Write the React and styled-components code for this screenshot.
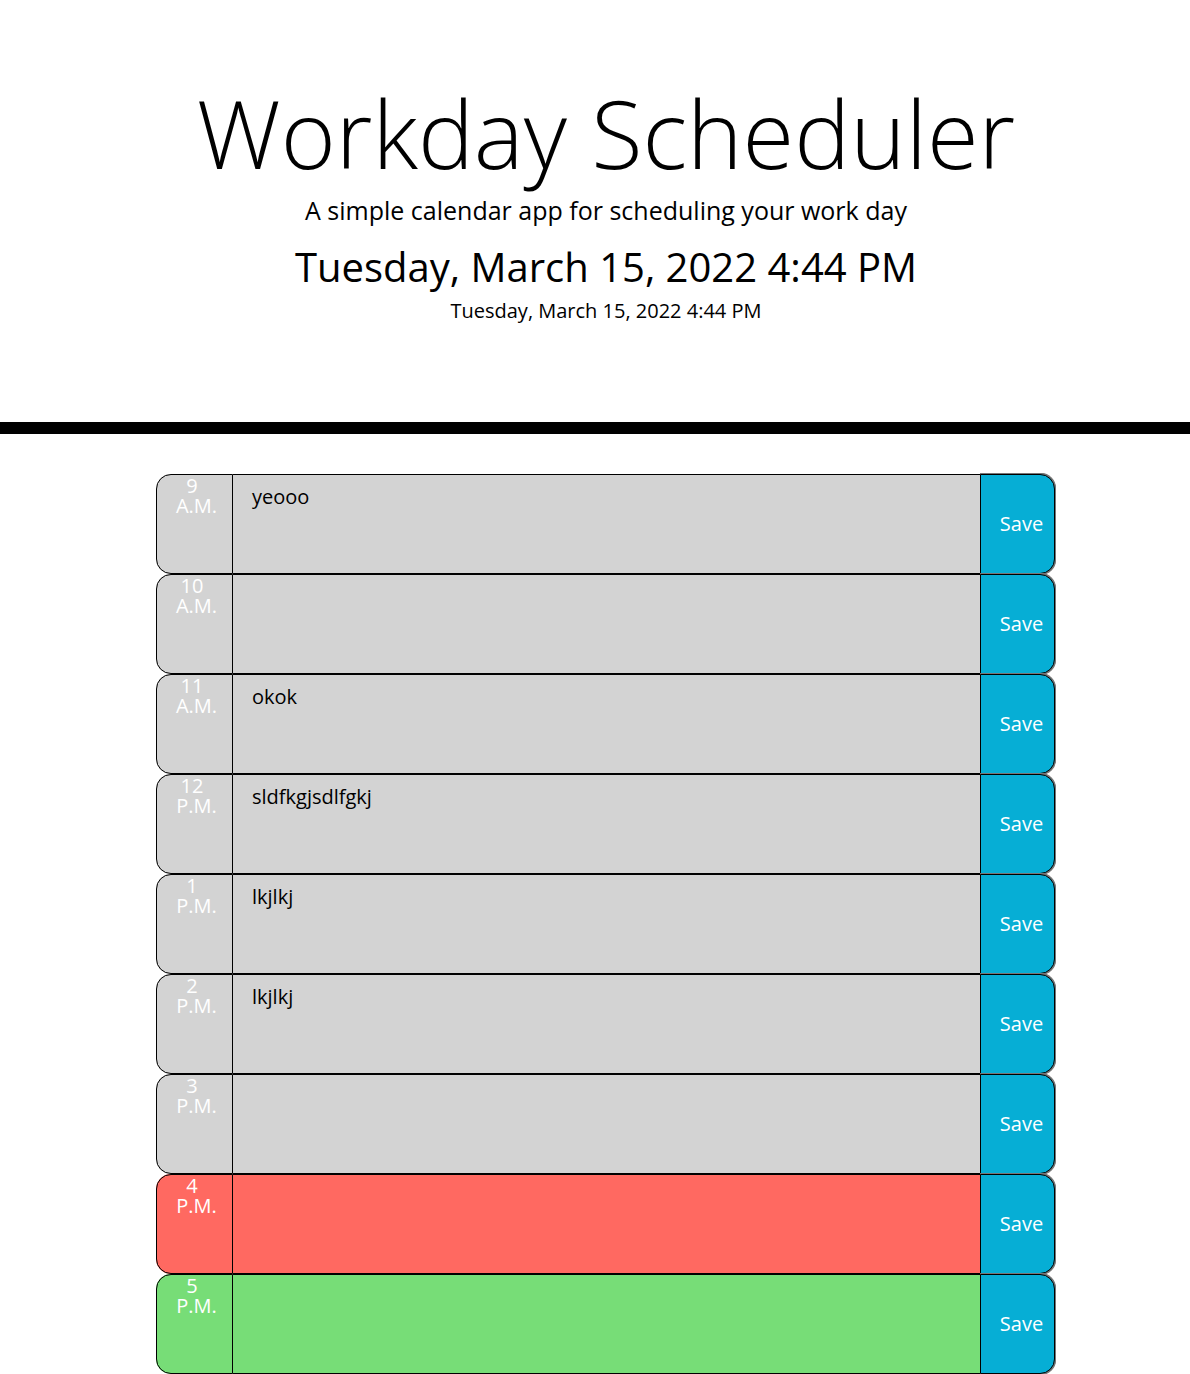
import React, { useState } from "react";
import styled, { createGlobalStyle } from "styled-components";

const Global = createGlobalStyle`
  html, body { margin: 0; padding: 0; background: #ffffff; }
  body { font-family: "Open Sans", "Liberation Sans", sans-serif; color: #000; }
  * { box-sizing: border-box; }
`;

const Header = styled.header`
  text-align: center;
  padding: 77px 0 96px 22px;
  border-bottom: 12px solid #000;
`;

const Title = styled.h1`
  margin: 0;
  font-size: 94px;
  font-weight: 300;
  line-height: 113px;
`;

const Lead = styled.p`
  margin: 2px 0 0;
  font-size: 25px;
  font-weight: 400;
  line-height: 36px;
`;

const BigDate = styled.p`
  margin: 15px 0 0;
  font-size: 40px;
  line-height: 48px;
`;

const SmallDate = styled.p`
  margin: 5px 0 0;
  font-size: 20px;
  line-height: 30px;
`;

const Schedule = styled.main`
  width: 899px;
  margin: 40px 0 0 156px;
`;

const colors = { past: "#d3d3d3", present: "#ff6961", future: "#77dd77" };

const Row = styled.section`
  display: grid;
  grid-template-columns: 77px 1fr 75px;
  height: 100px;
  background: ${(p) => colors[p.$state]};
  border-radius: 15px;
`;

const Hour = styled.div`
  border: 1px solid #000;
  border-radius: 15px 0 0 15px;
  background: ${(p) => colors[p.$state]};
  color: #fff;
  font-size: 20px;
  line-height: 20px;
  text-align: center;
  padding-top: 1px;
`;

const HourLine = styled.span`
  display: block;
  padding: ${(p) => (p.$second ? "0 0 0 4px" : "0 5px 0 0")};
`;

const Note = styled.textarea`
  border: none;
  border-top: 1px solid #000;
  border-bottom: 1px solid #000;
  background: ${(p) => colors[p.$state]};
  font-family: "Open Sans", "Liberation Sans", sans-serif;
  font-size: 20px;
  line-height: 30px;
  color: #000;
  padding: 7px 19px;
  resize: none;
  outline: none;
  margin: 0;
`;

const SaveButton = styled.button`
  background: #06aed5;
  color: #fff;
  border: 1px solid #000;
  border-radius: 0 15px 15px 0;
  box-shadow: 0 -1px 0 #777, 1px 0 0 #777, 0 1px 0 #777, 1px 1px 0 #777, 1px -1px 0 #777;
  font-family: "Open Sans", "Liberation Sans", sans-serif;
  font-size: 20px;
  padding: 0 0 2px 8px;
  margin: 0;
  cursor: pointer;
`;

const hours = [
  { h: "9", m: "A.M.", text: "yeooo", s: "past" },
  { h: "10", m: "A.M.", text: "", s: "past" },
  { h: "11", m: "A.M.", text: "okok", s: "past" },
  { h: "12", m: "P.M.", text: "sldfkgjsdlfgkj", s: "past" },
  { h: "1", m: "P.M.", text: "lkjlkj", s: "past" },
  { h: "2", m: "P.M.", text: "lkjlkj", s: "past" },
  { h: "3", m: "P.M.", text: "", s: "past" },
  { h: "4", m: "P.M.", text: "", s: "present" },
  { h: "5", m: "P.M.", text: "", s: "future" },
];

function Block({ item }) {
  const [val, setVal] = useState(item.text);
  return (
    <Row $state={item.s}>
      <Hour $state={item.s}>
        <HourLine>{item.h}</HourLine>
        <HourLine $second>{item.m}</HourLine>
      </Hour>
      <Note $state={item.s} value={val} onChange={(e) => setVal(e.target.value)} />
      <SaveButton>Save</SaveButton>
    </Row>
  );
}

export default function App() {
  return (
    <>
      <Global />
      <Header>
        <Title>Workday Scheduler</Title>
        <Lead>A simple calendar app for scheduling your work day</Lead>
        <BigDate>Tuesday, March 15, 2022 4:44 PM</BigDate>
        <SmallDate>Tuesday, March 15, 2022 4:44 PM</SmallDate>
      </Header>
      <Schedule>
        {hours.map((it) => (
          <Block key={it.h} item={it} />
        ))}
      </Schedule>
    </>
  );
}
